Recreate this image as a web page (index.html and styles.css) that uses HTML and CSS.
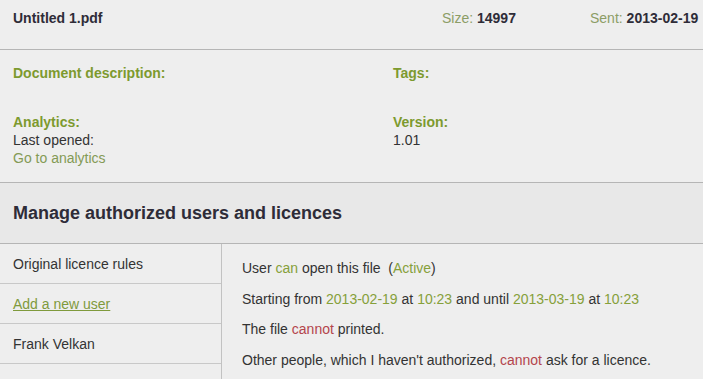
FILE: index.html
```html
<!DOCTYPE html>
<html lang="en">
<head>
    <meta charset="UTF-8">
    <meta name="viewport" content="width=device-width, initial-scale=1.0">
    <title>Untitled 1.pdf - Document details</title>
    <link rel="stylesheet" href="styles.css">
</head>
<body>

<div class="file-header">
    <div class="file-name">Untitled 1.pdf</div>
    <div class="file-meta"><span class="meta-label">Size:</span> <b>14997</b></div>
    <div class="file-meta"><span class="meta-label">Sent:</span> <b>2013-02-19</b></div>
</div>

<div class="file-info">
    <div class="info-block">
        <div class="label">Document description:</div>
    </div>
    <div class="info-block">
        <div class="label">Tags:</div>
    </div>
    <div class="info-block">
        <div class="label">Analytics:</div>
        <div>Last opened:</div>
        <a href="#" class="link">Go to analytics</a>
    </div>
    <div class="info-block">
        <div class="label">Version:</div>
        <div>1.01</div>
    </div>
</div>

<h2 class="section-title">Manage authorized users and licences</h2>

<div class="licences">
    <ul class="user-list">
        <li>Original licence rules</li>
        <li><a href="#" class="add-user">Add a new user</a></li>
        <li>Frank Velkan</li>
        <li></li>
    </ul>
    <div class="rules">
        <p>User <span class="yes">can</span> open this file &nbsp;(<span class="yes">Active</span>)</p>
        <p>Starting from <span class="yes">2013-02-19</span> at <span class="yes">10:23</span> and until <span class="yes">2013-03-19</span> at <span class="yes">10:23</span></p>
        <p>The file <span class="no">cannot</span> printed.</p>
        <p>Other people, which I haven't authorized, <span class="no">cannot</span> ask for a licence.</p>
    </div>
</div>

</body>
</html>
```

FILE: styles.css
```css
body {
    font-family: "Liberation Sans", Arial, sans-serif;
    font-size: 14px;
    line-height: 18px;
    margin: 0;
    padding: 0;
    color: #333;
    background-color: #eeeeee;
    overflow: hidden;
    white-space: nowrap;
}

a {
    color: #7f9a3c;
    text-decoration: none;
}

.file-header {
    display: grid;
    grid-template-columns: 429px 148px auto;
    padding: 9px 0 22px 13px;
    border-bottom: 1px solid #b5b5b5;
}

.file-name {
    font-weight: bold;
    color: #2e2c38;
}

.file-meta b {
    color: #2e2c38;
}

.meta-label {
    color: #8c9d66;
}

.file-info {
    display: grid;
    grid-template-columns: 380px auto;
    row-gap: 31px;
    padding: 14px 0 15px 13px;
    border-bottom: 1px solid #b5b5b5;
}

.label {
    font-weight: bold;
    color: #7d9a2e;
}

.link {
    color: #849a55;
}

.section-title {
    margin: 0;
    padding: 20px 13px;
    font-size: 18px;
    line-height: 20px;
    color: #2e2c38;
    background-color: #e8e8e8;
    border-bottom: 1px solid #b5b5b5;
}

.licences {
    display: flex;
}

.user-list {
    list-style: none;
    margin: 0;
    padding: 0;
    width: 221px;
    border-right: 1px solid #c2c2c2;
}

.user-list li {
    height: 18px;
    padding: 11px 13px 10px;
    border-bottom: 1px solid #c8c8c8;
}

.add-user {
    text-decoration: underline;
}

.rules {
    padding: 15px 20px;
}

.rules p {
    margin: 0 0 12.5px;
}

.yes {
    color: #86a03a;
}

.no {
    color: #b4454c;
}
```
